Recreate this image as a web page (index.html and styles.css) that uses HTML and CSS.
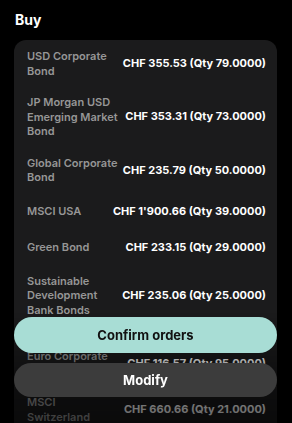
FILE: index.html
```
<!DOCTYPE html>
<html>
<head>
<meta charset="utf-8">
<link rel="stylesheet" href="styles.css">
</head>
<body>
<div class="page">
  <h1 class="title">Buy</h1>
  <div class="card">
    <div class="row"><div class="label">USD Corporate Bond</div><div class="value">CHF 355.53 (Qty 79.0000)</div></div>
    <div class="row"><div class="label">JP Morgan USD Emerging Market Bond</div><div class="value">CHF 353.31 (Qty 73.0000)</div></div>
    <div class="row"><div class="label">Global Corporate Bond</div><div class="value">CHF 235.79 (Qty 50.0000)</div></div>
    <div class="row"><div class="label">MSCI USA</div><div class="value">CHF 1'900.66 (Qty 39.0000)</div></div>
    <div class="row"><div class="label">Green Bond</div><div class="value">CHF 233.15 (Qty 29.0000)</div></div>
    <div class="row"><div class="label">Sustainable Development Bank Bonds</div><div class="value">CHF 235.06 (Qty 25.0000)</div></div>
    <div class="row row-spaced"><div class="label">Euro Corporate Bond</div><div class="value">CHF 116.57 (Qty 95.0000)</div></div>
    <div class="row"><div class="label">MSCI Switzerland</div><div class="value">CHF 660.66 (Qty 21.0000)</div></div>
    <div class="row"><div class="label">Emerging Markets</div><div class="value">CHF 120.40 (Qty 12.0000)</div></div>
  </div>
</div>
<div class="fade"></div>
<div class="actions">
  <button class="btn btn-primary">Confirm orders</button>
  <button class="btn btn-secondary">Modify</button>
</div>
</body>
</html>
```
FILE: styles.css
```
html, body {
  margin: 0;
  padding: 0;
  background: #000;
  height: 100%;
  overflow: hidden;
}
body {
  font-family: Inter, "Noto Sans", sans-serif;
  color: #fff;
}
.page {
  padding: 10px 15px 0 14px;
}
.title {
  margin: 0 0 0 1px;
  font-size: 14px;
  line-height: 20px;
  font-weight: 700;
  color: #fff;
}
.card {
  margin-top: 10px;
  background: #1b1b1c;
  border-radius: 12px;
  padding: 9px 11px 40px 13px;
  display: flex;
  flex-direction: column;
  gap: 17px;
}
.row {
  display: flex;
  align-items: center;
  min-height: 19px;
  gap: 5px;
}
.row-spaced {
  margin-top: 15px;
}
.label {
  flex: 1;
  min-width: 0;
  font-size: 11px;
  line-height: 14.5px;
  font-weight: 600;
  color: #969696;
}
.value {
  white-space: nowrap;
  font-size: 11px;
  line-height: 15px;
  font-weight: 700;
  color: #fff;
}
.fade {
  position: fixed;
  left: 0;
  right: 0;
  bottom: 0;
  height: 110px;
  background: linear-gradient(to bottom, rgba(0,0,0,0) 0%, rgba(0,0,0,0.45) 60%, rgba(0,0,0,0.6) 100%);
  pointer-events: none;
}
.actions {
  position: fixed;
  left: 14px;
  right: 15px;
  bottom: 26px;
  display: flex;
  flex-direction: column;
  gap: 10px;
}
.btn {
  border: none;
  border-radius: 18px;
  font-family: Inter, "Noto Sans", sans-serif;
  font-weight: 700;
  font-size: 13px;
  padding: 0;
}
.btn-primary {
  height: 36px;
  background: #a8ddd5;
  color: #111;
}
.btn-secondary {
  height: 34px;
  background: #3c3c3c;
  color: #fff;
}
```
